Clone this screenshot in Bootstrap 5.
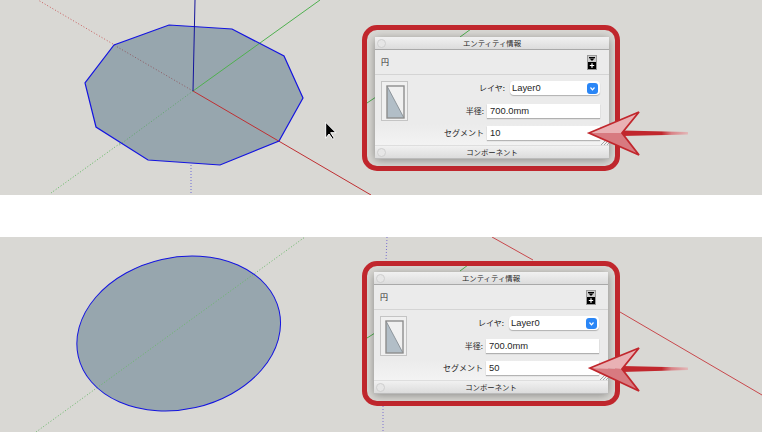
<!DOCTYPE html>
<html lang="ja">
<head>
  <meta charset="UTF-8" />
  <meta name="viewport" content="width=device-width, initial-scale=1.0" />
  <title>エンティティ情報</title>
  <link href="https://cdn.jsdelivr.net/npm/bootstrap@5.3.2/dist/css/bootstrap.min.css" rel="stylesheet" />
  <style>
    body {
      background: #fff;
      font-family: "Liberation Sans", "Noto Sans CJK JP", sans-serif;
      overflow: hidden;
    }
    .shot-stack { gap: 42px; }
    .scene { height: 195px; background: #d9d8d4; overflow: hidden; }
    .scene-art { display: block; width: 762px; height: 195px; }
    .arrow-art { position: absolute; left: 0; top: 0; width: 762px; height: 195px; }

    /* red callout round the panel */
    .call-frame {
      position: absolute;
      left: 362px;
      top: 25px;
      width: 258px;
      height: 146px;
      padding: 7px 6px 8px 8px;
      border: 5px solid #c1272d;
      border-radius: 15px;
    }
    .call-frame-low { top: 24px; height: 145px; padding: 6px 7px 8px 7px; }

    .info-panel {
      height: 121px;
      background: #ebebeb;
      color: #262626;
      box-shadow: 0 2px 9px rgba(0, 0, 0, .38);
      font-family: "Noto Sans CJK JP", "Liberation Sans", sans-serif;
      font-size: 8px;
      line-height: 1;
    }
    .title-strip {
      height: 13px;
      background: linear-gradient(#f1f1f1, #dcdcdc);
      font-size: 7.4px;
    }
    .title-top { border-bottom: 1px solid #a9a9a9; }
    .title-bottom { border-top: 1px solid #dedede; box-shadow: 0 1px 0 #bbb; }
    .dot-btn {
      position: absolute;
      left: 2px;
      top: 1.5px;
      width: 9px;
      height: 9px;
      border: 1px solid #cfcfcf;
      border-radius: 50%;
      background: #e6e6e6;
    }
    .kind-row {
      height: 25px;
      padding: 0 12px 0 6px;
      border-bottom: 1px solid #d4d4d4;
    }
    .body-zone {
      height: 70px;
      padding: 6px 9px 0 6px;
      background: linear-gradient(#ebebeb 70%, #f3f3f3);
    }
    .thumb-box {
      width: 27px;
      height: 40px;
      padding: 3px 4px;
      background: #f0f0f0;
      border: 1px solid #c4c4c4;
    }
    .field-rows { gap: 8.5px; }
    .field-line { height: 14px; }
    .field-lbl { margin-right: 3px; white-space: nowrap; }
    .field-lbl-wide { margin-right: 5px; }
    .form-control.val-box {
      width: 113px;
      height: 14px;
      min-height: 0;
      padding: 0 3px;
      border: 0;
      border-radius: 0;
      background: #fff;
      box-shadow: 0 1px 1px rgba(0, 0, 0, .25);
      color: #262626;
      font-family: "Liberation Sans", sans-serif;
      font-size: 9.4px;
      line-height: 14px;
    }
    .form-control.pick-box {
      width: 90px;
      padding: 0 2px;
      border-radius: 4px;
    }
    .pick-btn {
      width: 11px;
      height: 11px;
      background: #2a86f6;
      border-radius: 3px;
    }
    .grip-art { position: absolute; right: 0; bottom: 0; }
  </style>
</head>
<body>
  <div class="d-flex flex-column shot-stack">

    <!-- 10 segments -->
    <div class="scene position-relative">
      <svg class="scene-art" viewBox="0 0 762 195">
        <line x1="193" y1="91" x2="38" y2="0" stroke="#c95f5f" stroke-width="1" stroke-dasharray="1 2" />
        <line x1="193" y1="91" x2="51" y2="193" stroke="#5fb85f" stroke-width="1" stroke-dasharray="1 2" />
        <line x1="191" y1="165" x2="191" y2="195" stroke="#6a6ad8" stroke-width="1" stroke-dasharray="1 2" />
        <polygon points="169,25 232,29 284,56 303,98 279,141 220,165 148,160 96,127 85,83 114,45" fill="#97a6ae" />
        <line x1="193" y1="91" x2="114" y2="45" stroke="#8f5a62" stroke-width="1" stroke-dasharray="1 2" />
        <line x1="193" y1="91" x2="118" y2="146" stroke="#5fa76a" stroke-width="1" stroke-dasharray="1 2" />
        <line x1="193" y1="91" x2="320" y2="0" stroke="#4fb04f" stroke-width="1" />
        <line x1="193" y1="91" x2="371" y2="195" stroke="#bf2f32" stroke-width="1" />
        <polygon points="169,25 232,29 284,56 303,98 279,141 220,165 148,160 96,127 85,83 114,45" fill="none" stroke="#1414e0" stroke-width="1.2" />
        <line x1="193" y1="91" x2="195" y2="0" stroke="#14149c" stroke-width="1" />
        <line x1="460" y1="37" x2="471" y2="29" stroke="#4fb04f" stroke-width="1" />
        <line x1="367" y1="103" x2="376" y2="97" stroke="#4fb04f" stroke-width="1" />
        <polygon points="325.7,122.3 325.7,138.3 329,134 332.7,139.3 334.3,138.3 330.7,132.7 336,132.7" fill="#000" stroke="#fff" stroke-width="1" />
      </svg>

      <div class="call-frame">
        <div class="info-panel d-flex flex-column">
          <div class="title-strip title-top position-relative d-flex align-items-center justify-content-center">
            <span class="dot-btn"></span>エンティティ情報
          </div>
          <div class="kind-row d-flex align-items-center justify-content-between">
            <span>円</span>
            <svg width="10" height="15" viewBox="0 0 10 15">
              <rect x=".5" y=".5" width="9" height="14" fill="#ccc" stroke="#999" />
              <rect x="2" y="2" width="6" height="1.2" fill="#000" />
              <polygon points="2.5,3.4 7.5,3.4 5,6" fill="#000" />
              <rect x="1" y="7" width="8" height="7" fill="#000" />
              <path d="M5 8.3v4.4M2.8 10.5h4.4" stroke="#fff" stroke-width="1.2" />
            </svg>
          </div>
          <div class="body-zone d-flex justify-content-between position-relative">
            <div class="thumb-box">
              <svg class="d-block" width="19" height="34" viewBox="0 0 19 34">
                <polygon points="1,1 18,33 1,33" fill="#b2bec7" />
                <path d="M1 1 18 33" stroke="#7d858b" stroke-width=".8" />
                <rect x="1" y="1" width="17" height="32" fill="none" stroke="#8d8d8d" stroke-width="1.4" />
              </svg>
            </div>
            <div class="field-rows d-flex flex-column">
              <div class="field-line d-flex justify-content-end align-items-center">
                <span class="field-lbl field-lbl-wide">レイヤ:</span>
                <div class="form-control val-box pick-box d-flex align-items-center justify-content-between">
                  <span>Layer0</span>
                  <span class="pick-btn d-flex align-items-center justify-content-center">
                    <svg width="7" height="7" viewBox="0 0 7 7"><path d="M1.5 2.5 3.5 4.8 5.5 2.5" fill="none" stroke="#fff" stroke-width="1.2" /></svg>
                  </span>
                </div>
              </div>
              <div class="field-line d-flex justify-content-end align-items-center">
                <span class="field-lbl">半径:</span>
                <div class="form-control val-box">700.0mm</div>
              </div>
              <div class="field-line d-flex justify-content-end align-items-center">
                <span class="field-lbl">セグメント</span>
                <div class="form-control val-box">10</div>
              </div>
            </div>
            <svg class="grip-art" width="9" height="6" viewBox="0 0 9 6">
              <path d="M1 6 6 1M4 6 9 1M7 6 9 4" stroke="#a3a3a3" stroke-width="1" />
            </svg>
          </div>
          <div class="title-strip title-bottom position-relative d-flex align-items-center justify-content-center">
            <span class="dot-btn"></span>コンポーネント
          </div>
        </div>
      </div>

      <svg class="arrow-art" viewBox="0 0 762 195">
        <defs>
          <linearGradient id="shaftA" x1="0" x2="1" y1="0" y2="0">
            <stop offset="0" stop-color="#c1272d" />
            <stop offset=".6" stop-color="#c1272d" />
            <stop offset=".75" stop-color="#d98286" />
            <stop offset="1" stop-color="#e2b9b9" />
          </linearGradient>
        </defs>
        <polygon points="622,130.5 688,132 688,134.5 622,136" fill="url(#shaftA)" />
        <polygon points="589,133 639,112 622,133" fill="#e9b1b4" />
        <polygon points="589,133 622,133 639,155" fill="#d87a80" />
        <polygon points="589,133 639,112 622,133 639,155" fill="none" stroke="#c1272d" stroke-width="1.8" stroke-linejoin="miter" />
      </svg>
    </div>

    <!-- 50 segments -->
    <div class="scene position-relative">
      <svg class="scene-art" viewBox="0 0 762 195">
        <ellipse cx="178.7" cy="96.5" rx="103" ry="76" transform="rotate(-12.8 178.7 96.5)" fill="#97a6ae" />
        <line x1="36" y1="195" x2="305" y2="0" stroke="#69b869" stroke-width="1" stroke-dasharray="1 2" />
        <ellipse cx="178.7" cy="96.5" rx="103" ry="76" transform="rotate(-12.8 178.7 96.5)" fill="none" stroke="#1414e0" stroke-width="1" />
        <line x1="492" y1="0" x2="533" y2="23" stroke="#c8484c" stroke-width="1" />
        <line x1="620" y1="75" x2="762" y2="158" stroke="#c8484c" stroke-width="1" />
        <line x1="387" y1="0" x2="386" y2="24" stroke="#7a70d0" stroke-width="1" stroke-dasharray="1 2" />
        <line x1="383" y1="169" x2="383" y2="195" stroke="#7a70d0" stroke-width="1" stroke-dasharray="1 2" />
        <line x1="460" y1="34" x2="468" y2="28" stroke="#4fb04f" stroke-width="1" />
        <line x1="367" y1="101" x2="375" y2="96" stroke="#4fb04f" stroke-width="1" />
      </svg>

      <div class="call-frame call-frame-low">
        <div class="info-panel d-flex flex-column">
          <div class="title-strip title-top position-relative d-flex align-items-center justify-content-center">
            <span class="dot-btn"></span>エンティティ情報
          </div>
          <div class="kind-row d-flex align-items-center justify-content-between">
            <span>円</span>
            <svg width="10" height="15" viewBox="0 0 10 15">
              <rect x=".5" y=".5" width="9" height="14" fill="#ccc" stroke="#999" />
              <rect x="2" y="2" width="6" height="1.2" fill="#000" />
              <polygon points="2.5,3.4 7.5,3.4 5,6" fill="#000" />
              <rect x="1" y="7" width="8" height="7" fill="#000" />
              <path d="M5 8.3v4.4M2.8 10.5h4.4" stroke="#fff" stroke-width="1.2" />
            </svg>
          </div>
          <div class="body-zone d-flex justify-content-between position-relative">
            <div class="thumb-box">
              <svg class="d-block" width="19" height="34" viewBox="0 0 19 34">
                <polygon points="1,1 18,33 1,33" fill="#b2bec7" />
                <path d="M1 1 18 33" stroke="#7d858b" stroke-width=".8" />
                <rect x="1" y="1" width="17" height="32" fill="none" stroke="#8d8d8d" stroke-width="1.4" />
              </svg>
            </div>
            <div class="field-rows d-flex flex-column">
              <div class="field-line d-flex justify-content-end align-items-center">
                <span class="field-lbl field-lbl-wide">レイヤ:</span>
                <div class="form-control val-box pick-box d-flex align-items-center justify-content-between">
                  <span>Layer0</span>
                  <span class="pick-btn d-flex align-items-center justify-content-center">
                    <svg width="7" height="7" viewBox="0 0 7 7"><path d="M1.5 2.5 3.5 4.8 5.5 2.5" fill="none" stroke="#fff" stroke-width="1.2" /></svg>
                  </span>
                </div>
              </div>
              <div class="field-line d-flex justify-content-end align-items-center">
                <span class="field-lbl">半径:</span>
                <div class="form-control val-box">700.0mm</div>
              </div>
              <div class="field-line d-flex justify-content-end align-items-center">
                <span class="field-lbl">セグメント</span>
                <div class="form-control val-box">50</div>
              </div>
            </div>
            <svg class="grip-art" width="9" height="6" viewBox="0 0 9 6">
              <path d="M1 6 6 1M4 6 9 1M7 6 9 4" stroke="#a3a3a3" stroke-width="1" />
            </svg>
          </div>
          <div class="title-strip title-bottom position-relative d-flex align-items-center justify-content-center">
            <span class="dot-btn"></span>コンポーネント
          </div>
        </div>
      </div>

      <svg class="arrow-art" viewBox="0 0 762 195">
        <defs>
          <linearGradient id="shaftB" x1="0" x2="1" y1="0" y2="0">
            <stop offset="0" stop-color="#c1272d" />
            <stop offset=".6" stop-color="#c1272d" />
            <stop offset=".75" stop-color="#d98286" />
            <stop offset="1" stop-color="#e2b9b9" />
          </linearGradient>
        </defs>
        <polygon points="622,129 688,130.5 688,133 622,135" fill="url(#shaftB)" />
        <polygon points="590,131 639,111 622,132" fill="#e9b1b4" />
        <polygon points="590,131 622,132 639,154" fill="#d87a80" />
        <polygon points="590,131 639,111 622,132 639,154" fill="none" stroke="#c1272d" stroke-width="1.8" stroke-linejoin="miter" />
      </svg>
    </div>

  </div>
  <script src="https://cdn.jsdelivr.net/npm/bootstrap@5.3.2/dist/js/bootstrap.bundle.min.js"></script>
</body>
</html>
